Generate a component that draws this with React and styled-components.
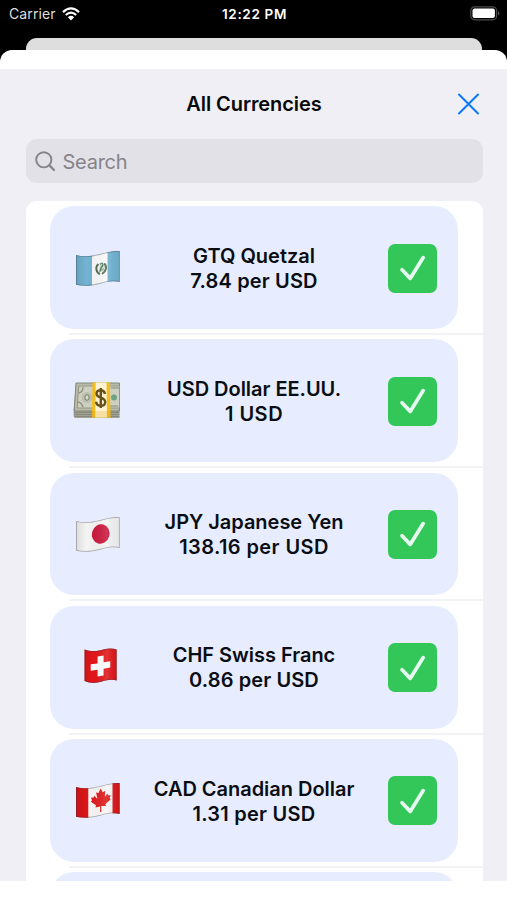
import React from 'react';
import styled, { createGlobalStyle } from 'styled-components';

const GlobalStyle = createGlobalStyle`
  * {
    box-sizing: border-box;
  }
  body {
    margin: 0;
    background: #fff;
    font-family: Inter, 'Liberation Sans', sans-serif;
  }
`;

const Phone = styled.div`
  width: 507px;
  height: 900px;
  overflow: hidden;
  background: #fff;
`;

const Backdrop = styled.div`
  height: 50px;
  background: #000;
`;

const StatusBar = styled.header`
  display: grid;
  grid-template-columns: 1fr auto 1fr;
  align-items: center;
  height: 38px;
  padding: 0 7px 11px 9px;
  color: #fff;
`;

const Carrier = styled.div`
  display: flex;
  align-items: center;
  gap: 6px;
  color: #dedede;
  font-size: 14px;
  letter-spacing: 0.1px;
`;

const Clock = styled.div`
  font-size: 13.5px;
  font-weight: 600;
  letter-spacing: 0.65px;
`;

const Battery = styled.svg`
  justify-self: end;
`;

const PreviousSheet = styled.div`
  height: 12px;
  margin: 0 25px 0 26px;
  border-radius: 11px 11px 0 0;
  background: #dedede;
`;

const SheetEdge = styled.div`
  background: #000;
`;

const SheetTop = styled.div`
  height: 19px;
  border-radius: 12px 12px 0 0;
  background: #fff;
`;

const Sheet = styled.main`
  height: 811.5px;
  overflow: hidden;
  padding: 0 24.5px 0 25.5px;
  background: #f0eff5;
`;

const TitleBar = styled.div`
  display: grid;
  grid-template-columns: 26px 1fr 24px;
  align-items: center;
  height: 70px;
  padding-right: 2px;
`;

const Title = styled.h1`
  grid-column: 2;
  margin: 0;
  color: #080808;
  font-size: 20px;
  font-weight: 600;
  letter-spacing: -0.08px;
  text-align: center;
`;

const CloseButton = styled.button`
  display: flex;
  padding: 0;
  border: 0;
  background: none;
`;

const SearchField = styled.div`
  display: flex;
  align-items: center;
  gap: 6px;
  height: 43.5px;
  padding: 2px 0 0 9px;
  border-radius: 11px;
  background: #e2e1e7;
  color: #85848a;
  font-size: 20px;
  letter-spacing: -0.25px;
`;

const List = styled.ul`
  margin: 18.5px 0 0;
  padding: 0;
  border-radius: 11px 11px 0 0;
  background: #fff;
  list-style: none;
`;

const Row = styled.li`
  height: 133.2px;
  padding: 5.2px 25px 0 24.5px;
`;

const Card = styled.div`
  display: grid;
  grid-template-columns: 48px 1fr 49px;
  align-items: center;
  height: 122.8px;
  padding: 0 20.5px 0 22px;
  border-radius: 24px;
  background: #e7edfe;
`;

const Divider = styled.div`
  height: 2px;
  margin: 4px -25px 0 19px;
  background: #f3f3f5;
`;

const Label = styled.div`
  padding-top: 2.6px;
  color: #0b0d14;
  font-size: 20px;
  font-weight: 600;
  line-height: 25px;
  text-align: center;
  white-space: nowrap;
`;

const Name = styled.div`
  letter-spacing: -0.03px;
`;

const Rate = styled.div`
  letter-spacing: ${(props) => props.$spacing};
`;

const Check = styled.div`
  display: flex;
  align-items: center;
  justify-content: center;
  height: 49px;
  margin-top: 1px;
  border-radius: 7px;
  background: #33c759;
`;

const FLAG = 'M4 12 C12 14.2 20 13.2 28 11 C35 9 41 7.5 47.7 8 V39 C41 37.6 35 38.6 29 40.4 C20 43 12 43.6 4 41.8 Z';
const SMALL_FLAG = 'M12.5 7.5 C20 10 26 9.2 32 7.2 C37 6 41 6.2 44.7 7.5 V38.5 C40 37 35 38 30 39.5 C24 41.5 18 41.5 12.5 39 Z';

function Flag({ id, shape = FLAG, children }) {
  return (
    <svg width="48" height="50" viewBox="0 0 48 50">
      <defs>
        <clipPath id={id}>
          <path d={shape} />
        </clipPath>
        <linearGradient id={`${id}-shade`}>
          <stop offset="0" stopColor="#000" stopOpacity="0.1" />
          <stop offset="0.25" stopColor="#000" stopOpacity="0" />
          <stop offset="0.7" stopColor="#fff" stopOpacity="0.12" />
          <stop offset="1" stopColor="#000" stopOpacity="0.05" />
        </linearGradient>
      </defs>
      <g clipPath={`url(#${id})`}>
        {children}
        <path d={shape} fill={`url(#${id}-shade)`} stroke="#30343c" strokeOpacity="0.4" strokeWidth="1.6" />
      </g>
    </svg>
  );
}

function Guatemala() {
  return (
    <Flag id="gt">
      <path d="M0 0H48V50H0Z" fill="#72b4d3" />
      <path d="M20 0H35.5V50H20Z" fill="#f8f9f8" />
      <path d="M26.4 21C23 24 24 29.5 28 31M32.2 20.5C35.5 23.5 34 28.5 30 31" fill="none" stroke="#546b50" strokeWidth="2" />
      <path d="M28 22L31 21L32 28L27 29Z" fill="#cbd4bf" />
      <path d="M28 21.5Q30.5 18.5 31 22L29 25L28 28" fill="none" stroke="#438467" strokeWidth="1.4" />
      <path d="M26.5 29.5L32 25.5" stroke="#85817b" strokeWidth="0.8" />
    </Flag>
  );
}

function Cash() {
  return (
    <svg width="48" height="50" viewBox="0 0 48 50">
      <path d="M4 7H47.5V42H3Q1.6 42 1.6 39V34Z" fill="#a1a291" />
      <path d="M2 36.5H47.5M2 38.5H47.5M2 40.5H47.5" stroke="#7c8074" strokeWidth="0.7" />
      <path d="M4 7H47.5V35H2.2Z" fill="#b9bba8" stroke="#828777" />
      <path d="M6.7 10H47.5V32H5.2Z" fill="#cecfc0" stroke="#939985" />
      <path d="M7 17Q11 16 11 11M6 26Q10 27 11 31" fill="none" stroke="#8b927f" strokeWidth="1.3" />
      <circle cx="15" cy="21.5" r="5.4" fill="#babfae" />
      <ellipse cx="15" cy="21.5" rx="2.1" ry="2.8" fill="#d8d9c8" stroke="#737c6d" />
      <circle cx="42" cy="21.5" r="3" fill="#6ea285" />
      <path d="M39 12H47M38 30H46" stroke="#858f7b" strokeWidth="1.2" />
      <path d="M20.5 6.5H38L38.5 41.5H20Z" fill="#f4bd19" />
      <path d="M23.7 6.5H34.5L35 41.5H23.2Z" fill="#fff3d3" />
      <path d="M20 35H38.5V41.5H20Z" fill="#d7a513" opacity="0.25" />
      <path
        d="M33 18C32.5 15.5 31 14.3 28.7 14.3C26 14.3 24.5 15.8 24.5 17.8C24.5 22.8 33.2 20.5 33.2 26C33.2 28.2 31.5 29.8 28.8 29.8C26 29.8 24.4 28.4 24 25.7M28.8 12V32"
        fill="none"
        stroke="#67501a"
        strokeWidth="2.4"
      />
    </svg>
  );
}

function Japan() {
  return (
    <Flag id="jp">
      <path d="M0 0H48V50H0Z" fill="#f5f5f5" />
      <ellipse cx="28.7" cy="25" rx="8.8" ry="9.8" transform="rotate(15 28.7 25)" fill="#cb173c" />
    </Flag>
  );
}

function Switzerland() {
  return (
    <Flag id="ch" shape={SMALL_FLAG}>
      <path d="M0 0H48V50H0Z" fill="#e1171b" />
      <path d="M25.6 14.5L31.6 13.5V20.3L38.3 19.2V25.6L31.6 26.8V33.4L25.6 34.5V27.8L18.7 28.7V22.3L25.6 21.4Z" fill="#fff" />
    </Flag>
  );
}

function Canada() {
  return (
    <Flag id="ca">
      <path d="M0 0H48V50H0Z" fill="#f8f7f6" />
      <path d="M0 0H16.3V50H0ZM40.5 0H48V50H40.5Z" fill="#dc1519" />
      <path
        d="M28.6 13.5L30.8 17.2L33.3 15.8L32.8 21.8L35.5 18.5L36.3 20.5L38.6 20L37.7 23.2L38.7 24.2L33.4 29.2L34 31L29.2 31L29.4 37H28L28.2 31.4L23.5 32.5L24 30.3L18.8 26.7L20 25.5L19 22.5L21.5 22.7L22.1 20.8L25.4 23.7L24.1 17.5L26.5 18Z"
        fill="#df1b1d"
      />
    </Flag>
  );
}

const currencies = [
  { name: 'GTQ Quetzal', rate: '7.84 per USD', spacing: '0.15px', Icon: Guatemala },
  { name: 'USD Dollar EE.UU.', rate: '1 USD', spacing: '0.5px', Icon: Cash },
  { name: 'JPY Japanese Yen', rate: '138.16 per USD', spacing: '0.4px', Icon: Japan },
  { name: 'CHF Swiss Franc', rate: '0.86 per USD', spacing: '0.1px', Icon: Switzerland },
  { name: 'CAD Canadian Dollar', rate: '1.31 per USD', spacing: '0.25px', Icon: Canada },
];

function CurrencyRow({ name, rate, spacing, Icon }) {
  return (
    <Row>
      <Card>
        <Icon />
        <Label>
          <Name>{name}</Name>
          <Rate $spacing={spacing}>{rate}</Rate>
        </Label>
        <Check>
          <svg width="28" height="28" viewBox="0 0 28 28">
            <path d="M3 15.8L11.2 24.4L24.2 3.6" fill="none" stroke="#e7faf2" strokeWidth="3.7" strokeLinecap="round" strokeLinejoin="round" />
          </svg>
        </Check>
      </Card>
      <Divider />
    </Row>
  );
}

function App() {
  return (
    <>
      <GlobalStyle />
      <Phone>
        <Backdrop>
          <StatusBar>
            <Carrier>
              Carrier
              <svg width="18" height="14" viewBox="0 0 18 14">
                <path d="M1 5.1Q9-2.3 17 5.1M3.8 8Q9 3.4 14.2 8" fill="none" stroke="#fff" strokeWidth="2.2" />
                <path d="M5.9 10.2Q9 7.5 12.1 10.2L9 13.4Z" fill="#fff" />
              </svg>
            </Carrier>
            <Clock>12:22 PM</Clock>
            <Battery width="30" height="15" viewBox="0 0 30 15">
              <rect x="0.8" y="0.8" width="25.8" height="13" rx="3.8" fill="none" stroke="#4b4b4b" strokeWidth="1.2" />
              <rect x="2.5" y="2.5" width="22.4" height="9.6" rx="2" fill="#fff" />
              <path d="M28 5Q31 7.3 28 9.6Z" fill="#4b4b4b" />
            </Battery>
          </StatusBar>
          <PreviousSheet />
        </Backdrop>
        <SheetEdge>
          <SheetTop />
        </SheetEdge>
        <Sheet>
          <TitleBar>
            <Title>All Currencies</Title>
            <CloseButton aria-label="Close">
              <svg width="24" height="24" viewBox="0 0 24 24">
                <path d="M2 2.5L21 21.5M21 2.5L2 21.5" fill="none" stroke="#087aff" strokeWidth="2" strokeLinecap="round" />
              </svg>
            </CloseButton>
          </TitleBar>
          <SearchField>
            <svg width="22" height="22" viewBox="0 0 22 22">
              <circle cx="8.8" cy="8.8" r="7.6" fill="none" stroke="currentColor" strokeWidth="1.9" />
              <path d="M14.4 14.4L19 19" stroke="currentColor" strokeWidth="2.3" strokeLinecap="round" />
            </svg>
            Search
          </SearchField>
          <List>
            {currencies.map((currency) => (
              <CurrencyRow key={currency.name} {...currency} />
            ))}
            <Row>
              <Card />
            </Row>
          </List>
        </Sheet>
      </Phone>
    </>
  );
}

export default App;
